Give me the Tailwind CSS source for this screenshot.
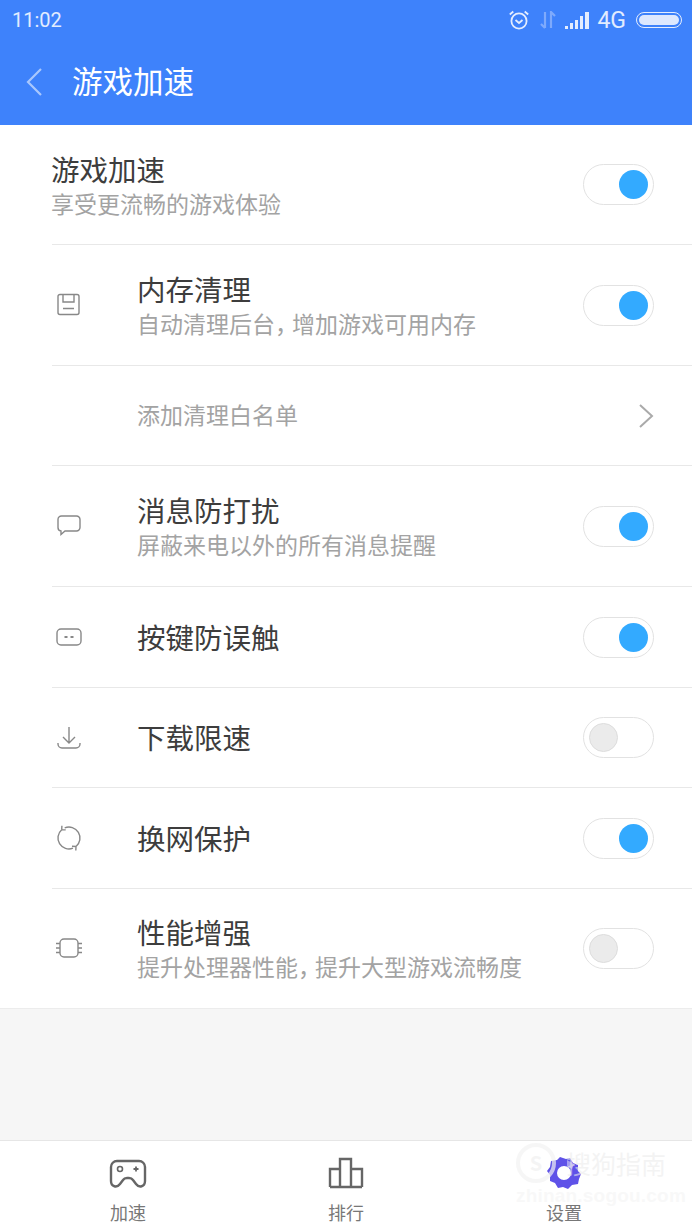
<!DOCTYPE html>
<html lang="zh">
<head>
<meta charset="utf-8">
<script src="https://cdn.jsdelivr.net/npm/@tailwindcss/browser@4"></script>
</head>
<body class="m-0">
<div class="w-[692px] h-[1230px] relative overflow-hidden flex flex-col bg-[#f6f6f6] font-['Noto_Sans_CJK_SC','Noto_Sans',sans-serif]">
  <header class="h-[125px] shrink-0 bg-[#3e82fb] text-white flex flex-col">
    <div class="h-[40px] flex items-center pl-[12px] pr-[10px]">
      <span class="text-[20px] leading-none text-white/85 font-['Roboto',sans-serif]">11:02</span>
      <div class="ml-auto flex items-center">
        <svg width="22" height="22" viewBox="0 0 22 22" fill="none" stroke="#e4edfe" stroke-width="1.800" class="mr-[10px]"><circle cx="11" cy="12" r="7.600"/><path d="M7.500 11l3.500 3 3.500-3M1.800 5.500l3.500-3M20.200 5.500l-3.500-3"/></svg>
        <svg width="16" height="18" viewBox="0 0 16 18" fill="none" stroke="#7eaafc" stroke-width="2.200" class="mr-[9px]"><path d="M5 1v16M1 13l4 4M11 17V1l4 4"/></svg>
        <svg width="26" height="18" viewBox="0 0 26 18" fill="#e4edfe" class="mr-[6px]"><rect x="0" y="15" width="3" height="3"/><rect x="5" y="12" width="3" height="6"/><rect x="10" y="9" width="3" height="9"/><rect x="15" y="5" width="3" height="13"/><rect x="20" y="1" width="4" height="17"/></svg>
        <span class="text-[23px] leading-none text-white/85 font-['Roboto',sans-serif] mr-[10px]">4G</span>
        <div class="w-[46px] h-[16px] rounded-full border-[1.500px] border-[#e4edfe] p-[2px]"><div class="w-full h-full rounded-full bg-[#dde8fe]"></div></div>
      </div>
    </div>
    <div class="h-[85px] flex items-center pb-[1px]">
      <svg width="20" height="30" viewBox="0 0 20 30" fill="none" stroke="#a9c7fd" stroke-width="2.200" class="ml-[24px] shrink-0"><path d="M17 2L4 15l13 13"/></svg>
      <h1 class="ml-[28px] -mt-[3px] text-[30.500px] leading-none font-normal">游戏加速</h1>
    </div>
  </header>

  <main class="bg-white h-[884px] shrink-0 border-b border-[#ececec] pl-[52px]">
    <div class="h-[120px] border-b border-[#e8e8e8] flex items-center pr-[38px]">
      <div class="flex-1 -ml-px"><div class="text-[28.500px] leading-[36px] text-[#3d3d3d]">游戏加速</div><div class="text-[23px] leading-[32px] text-[#a3a3a3]">享受更流畅的游戏体验</div></div>
      <div class="w-[71px] h-[41px] rounded-full border-[1.500px] border-[#e2e2e2] flex items-center justify-end pr-[5px]"><div class="w-[29px] h-[29px] rounded-full bg-[#33aaff]"></div></div>
    </div>

    <div class="h-[121px] border-b border-[#e8e8e8] flex items-center pr-[38px]">
      <div class="w-[85px] shrink-0"><svg width="26" height="24" viewBox="0 0 26 24" fill="none" stroke="#888" stroke-width="1.400" class="ml-[4px]"><rect x="2" y="1.500" width="21" height="20" rx="2"/><path d="M7 2v7h11V2M7 15.500h11"/></svg></div>
      <div class="flex-1"><div class="text-[28.500px] leading-[36px] text-[#3d3d3d]">内存清理</div><div class="text-[23px] leading-[32px] text-[#a3a3a3]">自动清理后台<span class="tracking-[-6px]">，</span>增加游戏可用内存</div></div>
      <div class="w-[71px] h-[41px] rounded-full border-[1.500px] border-[#e2e2e2] flex items-center justify-end pr-[5px]"><div class="w-[29px] h-[29px] rounded-full bg-[#33aaff]"></div></div>
    </div>

    <div class="h-[100px] border-b border-[#e8e8e8] flex items-center pl-[85px] pr-[38px]">
      <div class="flex-1 -mt-[2px] text-[23px] text-[#a3a3a3]">添加清理白名单</div>
      <svg width="16" height="26" viewBox="0 0 16 26" fill="none" stroke="#aaa" stroke-width="2"><path d="M2 2l12 11L2 24"/></svg>
    </div>

    <div class="h-[121px] border-b border-[#e8e8e8] flex items-center pr-[38px]">
      <div class="w-[85px] shrink-0"><svg width="26" height="24" viewBox="0 0 26 24" fill="none" stroke="#888" stroke-width="1.400" class="ml-[4px]"><path d="M5.500 2h15A3.500 3.500 0 0 1 24 5.500v8a3.500 3.500 0 0 1-3.500 3.500H9l-4 3.500V17a3.500 3.500 0 0 1-3-3.500v-8A3.500 3.500 0 0 1 5.500 2z"/></svg></div>
      <div class="flex-1"><div class="text-[28.500px] leading-[36px] text-[#3d3d3d]">消息防打扰</div><div class="text-[23px] leading-[32px] text-[#a3a3a3]">屏蔽来电以外的所有消息提醒</div></div>
      <div class="w-[71px] h-[41px] rounded-full border-[1.500px] border-[#e2e2e2] flex items-center justify-end pr-[5px]"><div class="w-[29px] h-[29px] rounded-full bg-[#33aaff]"></div></div>
    </div>

    <div class="h-[101px] border-b border-[#e8e8e8] flex items-center pr-[38px]">
      <div class="w-[85px] shrink-0"><svg width="28" height="20" viewBox="0 0 28 20" fill="none" stroke="#888" stroke-width="1.400" class="ml-[3px]"><rect x="2" y="2" width="24" height="16" rx="4"/><path d="M9.500 10h3M15.500 10h3" stroke-width="2"/></svg></div>
      <div class="flex-1 text-[28.500px] leading-[36px] text-[#3d3d3d]">按键防误触</div>
      <div class="w-[71px] h-[41px] rounded-full border-[1.500px] border-[#e2e2e2] flex items-center justify-end pr-[5px]"><div class="w-[29px] h-[29px] rounded-full bg-[#33aaff]"></div></div>
    </div>

    <div class="h-[100px] border-b border-[#e8e8e8] flex items-center pr-[38px]">
      <div class="w-[85px] shrink-0"><svg width="28" height="26" viewBox="0 0 28 26" fill="none" stroke="#888" stroke-width="1.400" class="ml-[3px]"><path d="M14 2v16M8 12l6 6 6-6M3 18v1a4 4 0 0 0 4 4h14a4 4 0 0 0 4-4v-1"/></svg></div>
      <div class="flex-1 -mt-[2px] text-[28.500px] leading-[36px] text-[#3d3d3d]">下载限速</div>
      <div class="w-[71px] h-[41px] rounded-full border-[1.500px] border-[#e2e2e2] flex items-center pl-[5px]"><div class="w-[29px] h-[29px] rounded-full bg-[#ebebeb] border border-[#ddd]"></div></div>
    </div>

    <div class="h-[101px] border-b border-[#e8e8e8] flex items-center pr-[38px]">
      <div class="w-[85px] shrink-0"><svg width="28" height="28" viewBox="0 0 28 28" fill="none" stroke="#888" stroke-width="1.400" class="ml-[3px]"><path d="M6.700 5.700A11 11 0 0 0 18 24.200M21 22.500A11 11 0 0 0 9.700 3.900"/><path d="M6.700 5.700l.2-4M6.700 5.700l4 .2M21 22.500l-.2 4M21 22.500l-4-.2"/></svg></div>
      <div class="flex-1 text-[28.500px] leading-[36px] text-[#3d3d3d]">换网保护</div>
      <div class="w-[71px] h-[41px] rounded-full border-[1.500px] border-[#e2e2e2] flex items-center justify-end pr-[5px]"><div class="w-[29px] h-[29px] rounded-full bg-[#33aaff]"></div></div>
    </div>

    <div class="h-[120px] flex items-center pr-[38px] pb-[2px]">
      <div class="w-[85px] shrink-0"><svg width="28" height="22" viewBox="0 0 28 22" fill="none" stroke="#888" stroke-width="1.400" class="ml-[3px]"><rect x="5" y="2" width="18" height="18" rx="4"/><path d="M1 6.500h4M1 11h4M1 15.500h4M23 6.500h4M23 11h4M23 15.500h4"/></svg></div>
      <div class="flex-1"><div class="text-[28.500px] leading-[36px] text-[#3d3d3d]">性能增强</div><div class="text-[23px] leading-[32px] text-[#a3a3a3]">提升处理器性能<span class="tracking-[-6px]">，</span>提升大型游戏流畅度</div></div>
      <div class="w-[71px] h-[41px] rounded-full border-[1.500px] border-[#e2e2e2] flex items-center pl-[5px]"><div class="w-[29px] h-[29px] rounded-full bg-[#ebebeb] border border-[#ddd]"></div></div>
    </div>
  </main>

  <div class="flex-1"></div>

  <nav class="h-[90px] shrink-0 bg-white border-t border-[#e6e6e6] px-[19px] grid grid-cols-3 text-[18px] leading-none text-[#777]">
    <div class="flex flex-col items-center pt-[18px]">
      <svg width="38" height="30" viewBox="0 0 38 30" fill="none" stroke="#666" stroke-width="2.400"><path d="M8 2h22a6 6 0 0 1 6 6v14c0 6-6 7-9 3l-3-4c-1-1.500-2-2-4-2h-2c-2 0-3 .5-4 2l-3 4c-3 4-9 3-9-3V8a6 6 0 0 1 6-6z"/><circle cx="11" cy="10" r="2.500" stroke-width="1.600"/><path d="M27 7.500v5M24.500 10h5" stroke-width="1.800"/></svg>
      <span class="mt-[14px]">加速</span>
    </div>
    <div class="flex flex-col items-center pt-[18px]">
      <svg width="36" height="32" viewBox="0 0 36 32" fill="none" stroke="#666" stroke-width="2.400" class="-mt-[2px]"><path d="M2 30V12h10v18M12 30V2h11v28M23 30V12h11v18M2 30h32"/></svg>
      <span class="mt-[14px]">排行</span>
    </div>
    <div class="flex flex-col items-center pt-[15px]">
      <svg width="36" height="34" viewBox="0 0 36 34" class="-ml-px"><path fill="#5f52e8" fill-rule="evenodd" d="M14 1l6 2 4-1 3 5 5 2v6l3 3-2 5-1 5-6 1-4 4-5-2-5 1-3-5-5-2v-6L1 15l3-4 1-6 6-1zM18 10a7 7 0 1 0 0 14 7 7 0 0 0 0-14z"/><path fill="#a79ff0" d="M21 4l7 4-2 5-5-3z"/></svg>
      <span class="mt-[13px]">设置</span>
    </div>
  </nav>

  <div class="absolute left-[516px] top-[1143px] w-[176px] pointer-events-none">
    <div class="flex items-center">
      <div class="w-[40px] h-[40px] rounded-full border-[4px] border-[#f2f2f2]/70 shrink-0 flex items-center justify-center text-[20px] leading-none font-bold text-[#f0f0f0]/70">S</div>
      <span class="ml-[10px] text-[25px] leading-none text-[#ececec]/60">搜狗指南</span>
    </div>
    <div class="mt-[3px] text-[19px] leading-none tracking-[0.2px] text-[#f4f4f4]/60 font-['Liberation_Sans',sans-serif] font-bold">zhinan.sogou.com</div>
  </div>
</div>
</body>
</html>
